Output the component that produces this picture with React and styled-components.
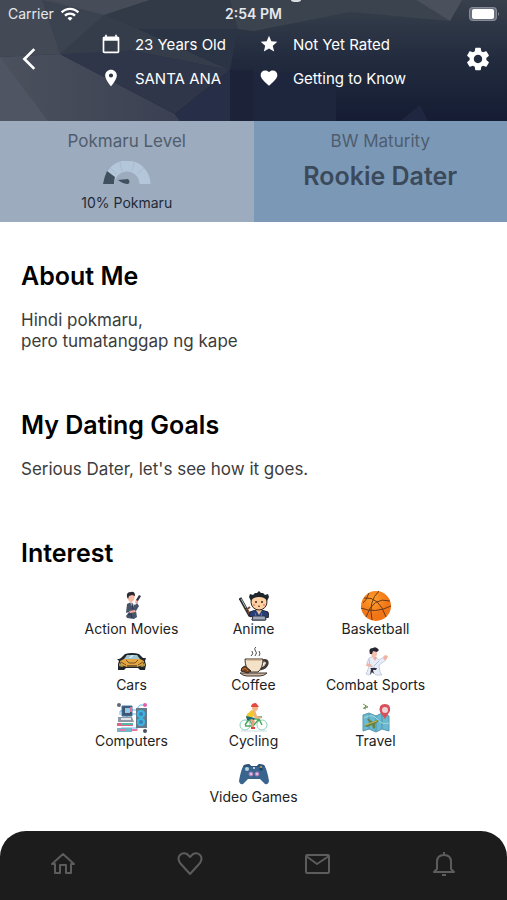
import React from "react";
import styled, { createGlobalStyle } from "styled-components";
import {
  MdArrowBackIosNew,
  MdCalendarToday,
  MdFavorite,
  MdLocationOn,
  MdSettings,
  MdStar,
  MdWifi,
} from "react-icons/md";

const ActionIcon = () => (
  <svg viewBox="0 0 30 30">
    <path d="M10 13 14 11 18 14 20 12 22 15 19 20 20 26 17 28 10 27 9 25 12 21 9 22Z" fill="#46546a" />
    <path d="M13 11 17 12 16 17Z" fill="#f3f3f6" />
    <path d="M15 12 16 18" stroke="#222b3d" strokeWidth="1" />
    <path d="M11 4Q14 0 18 4L17 9 14 12 11 9Z" fill="#f6bca8" />
    <path d="M10 6Q9 1 14 1 18 0 18 5L15 4 12 5 11 8Z" fill="#2b2932" />
    <path d="M18 12 19 8 21 9 21 13Z" fill="#f6a99b" />
    <path d="M19 9 22 4 24 5 21 10Z" fill="#303544" />
    <path d="M12 20 18 19 19 21 13 22Z" fill="#f3aaa0" />
    <path d="M11 24 14 23 15 27" stroke="#26324a" strokeWidth="1" fill="none" />
  </svg>
);

const AnimeIcon = () => (
  <svg viewBox="0 0 30 30">
    <path d="M1 7 11 25" stroke="#25282d" strokeWidth="3" />
    <path d="M2 8 7 17" stroke="#aeb8bd" strokeWidth="1" />
    <path d="M7 19 11 16M9 20 12 26" stroke="#7c4930" strokeWidth="2" />
    <path d="M11 21Q19 17 29 21L30 26 26 27V29H13L14 26 10 25Z" fill="#273e79" stroke="#202331" />
    <path d="M14 25H26L27 29H13Z" fill="#9fa9ba" stroke="#353847" />
    <path d="M17 19 20 24 23 19Z" fill="#f0c297" />
    <circle cx="20" cy="11" r="8" fill="#ffd0a0" stroke="#312825" />
    <path d="M12 10 10 6 11 3 14 4 16 2 18 2 20 0 22 2 24 2 26 4 29 3 30 6 28 10Q26 6 20 6 14 6 12 10Z" fill="#1e252b" />
    <circle cx="17" cy="11" r="1" fill="#332624" />
    <circle cx="23" cy="11" r="1" fill="#332624" />
    <circle cx="15" cy="14" r="1" fill="#ef8174" />
    <circle cx="25" cy="14" r="1" fill="#ef8174" />
    <path d="M19 15Q20 16 21 15" stroke="#593429" fill="none" />
    <path d="M16 22 17 25M23 22 22 25" stroke="#5274b8" />
  </svg>
);

const BasketballIcon = () => (
  <svg viewBox="0 0 30 30">
    <defs>
      <radialGradient id="ball" cx="40%" cy="30%">
        <stop offset="0" stopColor="#ffa02d" />
        <stop offset="1" stopColor="#f07517" />
      </radialGradient>
    </defs>
    <circle cx="15" cy="15" r="15" fill="url(#ball)" />
    <path
      d="M18 0Q7 10 11 29M0 17Q14 23 30 15M3 7Q18 5 25 26M5 26Q12 5 29 10M8 2Q5 10 2 12"
      stroke="#6b3a18"
      strokeWidth="1"
      fill="none"
    />
  </svg>
);

const CarIcon = () => (
  <svg viewBox="0 0 30 30">
    <path d="M2 12 4 11 8 7Q15 5 22 7L26 11 29 11 28 14 29 18 28 23H23L21 21H9L7 23H1L1 17 2 14 0 12Z" fill="#20242b" />
    <path d="M7 12 10 8H20L23 12Z" fill="#9fc3cf" />
    <path d="M12 11 15 8 17 8 14 11Z" fill="#e1eff0" />
    <path d="M3 14 7 12H23L27 14 26 18 20 20H10L4 18Z" fill="#e3a640" />
    <path d="M9 13 12 16H18L21 13M4 15 9 18M26 15 21 18" stroke="#795021" fill="none" />
    <path d="M2 16 7 19 5 20 2 19ZM28 16 23 19 25 20 28 19Z" fill="#b29848" />
    <path d="M10 19H20" stroke="#151a20" strokeWidth="1" />
  </svg>
);

const CoffeeIcon = () => (
  <svg viewBox="0 0 30 30">
    <path d="M12 9Q15 7 13 4M16 9Q19 6 16 3 15 1 17 0M20 9Q22 7 20 4" stroke="#4e4b4b" fill="none" />
    <path d="M23 14Q29 12 28 17 27 21 21 22" stroke="#3f3935" strokeWidth="3" fill="none" />
    <path d="M23 15Q27 14 26 17 25 19 22 20" stroke="#d8c3a7" fill="none" />
    <path d="M6 12H24Q24 21 19 25H11Q6 21 6 12Z" fill="#f3e1c8" stroke="#38332f" />
    <path d="M8 13H22" stroke="#c79a70" strokeWidth="1" />
    <path d="M1 26H28Q25 29 21 29H8Q4 29 1 26Z" fill="#cbb39c" stroke="#403834" />
    <path d="M2 24Q2 20 6 19L12 24 9 26Z" fill="#754320" stroke="#39251d" />
    <path d="M3 23 6 21 9 24" stroke="#bd7636" fill="none" />
  </svg>
);

const CombatIcon = () => (
  <svg viewBox="0 0 30 30">
    <path d="M8 11 13 9 18 13 23 10 25 13 18 18 19 25 21 28 15 28 12 25 8 28 5 27 8 20 6 16Z" fill="#e9edf8" stroke="#c6cee0" strokeWidth="1" />
    <path d="M11 9 16 10 14 14Z" fill="#efad99" />
    <path d="M10 3 16 3 16 8 13 11 10 8Z" fill="#f4c1ac" />
    <path d="M9 7Q7 1 12 1 15-1 18 3L16 5 12 4 11 7Z" fill="#282630" />
    <path d="M22 10 24 8 27 9 26 12 23 13Z" fill="#f0b3a2" />
    <path d="M8 12 9 19 14 21M18 14 13 19" stroke="#b6c0d7" fill="none" />
    <path d="M9 21 16 21 15 23 12 23 13 27 11 25 9 28 10 22Z" fill="#30333f" />
    <path d="M6 16 11 18 10 20 5 19Z" fill="#efb3a3" />
  </svg>
);

const ComputerIcon = () => (
  <svg viewBox="0 0 30 30">
    <path d="M15 7H19L23 2H27M3 12V8H6M15 11H19M4 25H20V28M10 13V15" stroke="#6db7e9" fill="none" />
    <circle cx="2" cy="2" r="2" fill="#626775" />
    <circle cx="28" cy="2" r="2" fill="#e75eab" />
    <circle cx="28" cy="28" r="2" fill="#4a5060" />
    <path d="M5 3H15V13H5Z" fill="#455468" stroke="#3a73a7" />
    <path d="M8 5H13V10H8Z" fill="#8ccbe9" />
    <path d="M13 4H15V9H13Z" fill="#df739d" />
    <path d="M19 5H30V25H19Z" fill="#66798b" />
    <circle cx="24" cy="11" r="4" fill="#39b7e0" />
    <circle cx="24" cy="19" r="4" fill="#39b7e0" />
    <circle cx="24" cy="11" r="2" fill="#3d7fb5" />
    <circle cx="24" cy="19" r="2" fill="#3d7fb5" />
    <path d="M1 14H15L17 19H1Z" fill="#8f97a6" />
    <path d="M4 16H14" stroke="#e2e5ea" strokeWidth="2" />
    <path d="M0 20H16V23H0Z" fill="#dc6684" />
    <path d="M4 20H16V22H4Z" fill="#58b7a9" />
    <path d="M0 25H15V29H0Z" fill="#6fb9ca" />
    <path d="M2 27H9M14 27H20" stroke="#e778a2" strokeWidth="2" />
  </svg>
);

const CyclingIcon = () => (
  <svg viewBox="0 0 30 30">
    <circle cx="6" cy="22" r="5" fill="none" stroke="#8fcfbc" />
    <circle cx="23" cy="22" r="5" fill="none" stroke="#8fcfbc" />
    <path d="M2 28H28" stroke="#c8dddd" />
    <path d="M6 22 10 16H20L14 23H6M10 16 14 23M23 22 19 14H23" stroke="#48a95d" strokeWidth="1.5" fill="none" />
    <path d="M11 8 16 7 18 13 22 14 21 16 16 15 14 12Z" fill="#f1ae82" />
    <path d="M8 11 13 7 16 11 12 16 7 15Z" fill="#f0c72e" />
    <path d="M7 13 16 15 14 18 8 17Z" fill="#176c76" />
    <path d="M13 16 16 18 14 24 16 25 12 25 13 19 10 17Z" fill="#e8a17d" />
    <circle cx="16" cy="5" r="3" fill="#f2b487" />
    <path d="M12 4Q12 0 17 0L20 4Z" fill="#e34a40" />
    <path d="M12 25H16" stroke="#de3e3f" strokeWidth="2" />
  </svg>
);

const TravelIcon = () => (
  <svg viewBox="0 0 30 30">
    <path d="M2 12 8 10 15 13 21 10 28 13V28L21 26 15 29 8 26 2 28Z" fill="#69b9d3" stroke="#5797ac" />
    <path d="M8 11V26M15 13V28M21 11V26" stroke="#4b93af" />
    <path d="M3 15Q12 10 16 16T28 20" stroke="#a5d9d2" strokeWidth="1" fill="none" />
    <path d="M3 23 9 20 6 16 8 16 12 19 16 17 18 18 14 21 14 25 12 26 11 22 6 24Z" fill="#668544" />
    <path d="M4 22 16 18" stroke="#d3b24a" />
    <path d="M24 16 19 9Q17 1 24 1 30 1 29 8Z" fill="#d94f5a" />
    <circle cx="24" cy="7" r="3" fill="#edd3d9" />
    <path d="M2 1 7 4 3 5 5 3M2 5 5 6" stroke="#769459" fill="none" />
  </svg>
);

const GamesIcon = () => (
  <svg viewBox="0 0 30 30">
    <path d="M5 6 10 5 12 7H18L20 5 25 6Q28 10 30 22 29 26 26 25L21 20H9L4 25Q1 26 0 22 2 10 5 6Z" fill="#38648d" />
    <path d="M5 6 10 5 12 7H18L20 5 25 6 26 8H4Z" fill="#2c5379" />
    <circle cx="8" cy="10" r="2" fill="#b8d4e3" />
    <circle cx="15" cy="9" r="1" fill="#d8e8f2" />
    <path d="M22 8V12M20 10H24" stroke="#15385c" strokeWidth="1" />
    <circle cx="22" cy="8" r="1" fill="#d9a558" />
    <circle cx="12" cy="15" r="2" fill="#e3b8df" stroke="#a478b4" />
    <circle cx="18" cy="15" r="2" fill="#e3b8df" stroke="#a478b4" />
  </svg>
);

const HomeIcon = () => (
  <NavSvg viewBox="0 0 28 28">
    <path d="M3 14 14 4 25 14H22V23H17V15H11V23H6V14Z" />
  </NavSvg>
);

const HeartIcon = () => (
  <NavSvg viewBox="0 0 28 28">
    <path d="M14 24 4 13Q1 8 4 5 7 2 11 4L14 7 17 4Q21 2 24 5 27 8 24 13Z" />
  </NavSvg>
);

const MailIcon = () => (
  <NavSvg viewBox="0 0 28 28">
    <rect x="3" y="5" width="23" height="18" rx="1" />
    <path d="M3 6 14 14 26 6" />
  </NavSvg>
);

const BellIcon = () => (
  <NavSvg viewBox="0 0 28 28">
    <path d="M4 22H24L21 19V12Q21 5 14 5 7 5 7 12V19L4 22ZM14 5V2M12 25H16" />
  </NavSvg>
);

const intereses = [
  { name: "Action Movies", Icon: ActionIcon },
  { name: "Anime", Icon: AnimeIcon },
  { name: "Basketball", Icon: BasketballIcon },
  { name: "Cars", Icon: CarIcon },
  { name: "Coffee", Icon: CoffeeIcon },
  { name: "Combat Sports", Icon: CombatIcon },
  { name: "Computers", Icon: ComputerIcon },
  { name: "Cycling", Icon: CyclingIcon },
  { name: "Travel", Icon: TravelIcon },
  { name: "Video Games", Icon: GamesIcon },
];

const datos = [
  { text: "23 Years Old", Icon: MdCalendarToday },
  { text: "Not Yet Rated", Icon: MdStar },
  { text: "SANTA ANA", Icon: MdLocationOn },
  { text: "Getting to Know", Icon: MdFavorite },
];

const menu = [
  { name: "Home", Icon: HomeIcon },
  { name: "Likes", Icon: HeartIcon },
  { name: "Messages", Icon: MailIcon },
  { name: "Notifications", Icon: BellIcon },
];

const Backdrop = () => (
  <BackdropSvg viewBox="0 0 507 121" preserveAspectRatio="none" aria-hidden="true">
    <defs>
      <linearGradient id="night" x1="0" y1="0" x2="0" y2="1">
        <stop offset="0" stopColor="#38404c" />
        <stop offset="0.5" stopColor="#222b3e" />
        <stop offset="1" stopColor="#151c33" />
      </linearGradient>
      <linearGradient id="fade" x1="0" y1="0" x2="1" y2="0">
        <stop offset="0" stopColor="#4c515d" />
        <stop offset="1" stopColor="#3a4052" />
      </linearGradient>
    </defs>
    <rect width="507" height="121" fill="url(#night)" />
    <path d="M0 0H150L104 15 60 54 0 57Z" fill="#434955" />
    <path d="M38 0H150L104 15 50 0Z" fill="#474d58" />
    <path d="M42 0 104 15 138 54 60 54Z" fill="#3b4250" />
    <path d="M0 57 60 54 175 114 180 121H0Z" fill="url(#fade)" />
    <path d="M0 57 48 121H0Z" fill="#505563" />
    <path d="M104 15 150 0H250L238 29 130 50Z" fill="#313a46" />
    <path d="M60 54 130 50 230 70 175 114Z" fill="#2f3649" />
    <path d="M104 15 138 29 230 70 130 50 60 54Z" fill="#353d4b" />
    <path d="M138 29 238 29 230 70Z" fill="#2a3444" />
    <path d="M175 114 230 70V121H180Z" fill="#272e47" />
    <path d="M230 0H416L450 21 350 12 254 31 238 29Z" fill="#3a434e" />
    <path d="M416 0H462L450 21Z" fill="#4a515c" />
    <path d="M230 70H253V121H230Z" fill="#1c2339" />
    <path d="M253 73 315 72 336 88V121H253Z" fill="#1e263e" />
    <path d="M400 121 420 105 428 121Z" fill="#1e273f" />
    <ellipse cx="296" cy="0" rx="5" ry="2" fill="#d9dce1" />
  </BackdropSvg>
);

const Gauge = () => (
  <GaugeSvg viewBox="0 0 48 24" role="img" aria-label="Pokmaru gauge">
    <path d="M6 23A18 18 0 0 1 42 23" fill="none" stroke="#b4c6d9" strokeWidth="11" />
    <path d="M0 23Q1 16 4 10L12 16Q11 19 11 23Z" fill="#40505f" />
    <path d="M7 7 14 13M17 1 19 10M31 1 29 10M41 7 34 13" stroke="#a9bccf" />
    <path d="M15 19 25 18Q28 21 25 23 20 23 15 19Z" fill="#40505f" />
  </GaugeSvg>
);

export default function App() {
  return (
    <>
      <GlobalStyle />
      <Page>
        <Header>
          <Backdrop />
          <StatusBar>
            <Carrier>
              Carrier <MdWifi size={20} />
            </Carrier>
            <Clock>2:54 PM</Clock>
            <BatterySvg viewBox="0 0 30 14" aria-label="Battery">
              <rect x="0" y="0" width="28" height="14" rx="4" fill="#868b95" />
              <rect x="1" y="1" width="26" height="12" rx="3" fill="#6a707c" />
              <rect x="3" y="2" width="22" height="10" rx="2" fill="#fff" />
              <path d="M29 5Q31 7 29 9Z" fill="#868b95" />
            </BatterySvg>
          </StatusBar>
          <HeaderRow>
            <IconButton type="button" aria-label="Back">
              <MdArrowBackIosNew size={26} />
            </IconButton>
            <InfoGrid>
              {datos.map(({ text, Icon }) => (
                <InfoItem key={text}>
                  <Icon size={20} />
                  {text}
                </InfoItem>
              ))}
            </InfoGrid>
            <IconButton type="button" aria-label="Settings">
              <MdSettings size={28} />
            </IconButton>
          </HeaderRow>
        </Header>

        <Stats>
          <Stat $bg="#9cabbd">
            <StatTitle>Pokmaru Level</StatTitle>
            <Gauge />
            <StatNote>10% Pokmaru</StatNote>
          </Stat>
          <Stat $bg="#7b99b7">
            <StatTitle>BW Maturity</StatTitle>
            <StatValue>Rookie Dater</StatValue>
          </Stat>
        </Stats>

        <Content>
          <Section>
            <Title>About Me</Title>
            <Text>
              Hindi pokmaru,
              <br />
              pero tumatanggap ng kape
            </Text>
          </Section>
          <Section>
            <Title>My Dating Goals</Title>
            <Text>Serious Dater, let's see how it goes.</Text>
          </Section>
          <section>
            <Title>Interest</Title>
            <InterestList>
              {intereses.map(({ name, Icon }) => (
                <Interest key={name}>
                  <Icon />
                  {name}
                </Interest>
              ))}
            </InterestList>
          </section>
        </Content>

        <NavBar>
          {menu.map(({ name, Icon }) => (
            <NavButton type="button" key={name} aria-label={name}>
              <Icon />
            </NavButton>
          ))}
        </NavBar>
      </Page>
    </>
  );
}

const GlobalStyle = createGlobalStyle`
  * {
    box-sizing: border-box;
  }

  body {
    margin: 0;
    background: #fff;
    font-family: Inter, "Liberation Sans", sans-serif;
  }

  button {
    border: none;
    background: none;
    padding: 0;
    cursor: pointer;
  }
`;

const Page = styled.div`
  min-height: 100vh;
  display: flex;
  flex-direction: column;
`;

const Header = styled.header`
  position: relative;
  isolation: isolate;
  padding-bottom: 26px;
  color: #fff;
`;

const BackdropSvg = styled.svg`
  position: absolute;
  inset: 0;
  width: 100%;
  height: 100%;
  z-index: -1;
`;

const StatusBar = styled.div`
  display: grid;
  grid-template-columns: 1fr auto 1fr;
  align-items: center;
  height: 27px;
  padding: 0 8px;
  font-size: 14px;
  color: #e6e8ec;
`;

const Carrier = styled.span`
  display: flex;
  align-items: center;
  gap: 6px;

  svg {
    color: #fff;
  }
`;

const Clock = styled.span`
  font-weight: 600;
`;

const BatterySvg = styled.svg`
  width: 30px;
  height: 14px;
  justify-self: end;
`;

const HeaderRow = styled.div`
  display: flex;
  align-items: flex-start;
  justify-content: space-between;
  padding: 0 14px;
`;

const IconButton = styled.button`
  display: flex;
  align-items: center;
  justify-content: center;
  width: 30px;
  height: 64px;
  color: #fff;
`;

const InfoGrid = styled.div`
  display: grid;
  grid-template-columns: 158px auto;
`;

const InfoItem = styled.div`
  display: flex;
  align-items: center;
  gap: 14px;
  height: 34px;
  font-size: 15px;
  white-space: nowrap;
`;

const Stats = styled.div`
  display: grid;
  grid-template-columns: 1fr 1fr;
`;

const Stat = styled.div`
  display: flex;
  flex-direction: column;
  align-items: center;
  min-height: 101px;
  padding-top: 8px;
  background: ${({ $bg }) => $bg};
`;

const StatTitle = styled.div`
  font-size: 17px;
  line-height: 24px;
  color: #4f5d6e;
`;

const GaugeSvg = styled.svg`
  width: 48px;
  height: 24px;
  margin: 8px 0;
`;

const StatNote = styled.div`
  font-size: 14px;
  line-height: 20px;
  color: #1f2a38;
`;

const StatValue = styled.div`
  margin-top: 8px;
  font-size: 25px;
  font-weight: 600;
  line-height: 30px;
  color: #3b4a5b;
`;

const Content = styled.main`
  flex: 1;
  padding: 38px 21px 20px;
`;

const Section = styled.section`
  margin-bottom: 57px;
`;

const Title = styled.h2`
  margin: 0 0 18px;
  font-size: 25px;
  font-weight: 600;
  line-height: 32px;
  color: #000;
`;

const Text = styled.p`
  margin: 0;
  font-size: 17px;
  line-height: 21px;
  color: #3c3c3c;
`;

const InterestList = styled.ul`
  display: flex;
  flex-wrap: wrap;
  justify-content: center;
  row-gap: 10px;
  max-width: 366px;
  margin: 0 auto;
  padding: 4px 0 0;
  list-style: none;
`;

const Interest = styled.li`
  display: flex;
  flex-direction: column;
  align-items: center;
  width: 122px;
  font-size: 14px;
  line-height: 16px;
  color: #222;

  svg {
    width: 30px;
    height: 30px;
  }
`;

const NavBar = styled.nav`
  display: grid;
  grid-template-columns: repeat(4, 1fr);
  height: 69px;
  padding-bottom: 4px;
  background: #1c1c1c;
  border-radius: 26px 26px 0 0;
`;

const NavButton = styled.button`
  display: flex;
  align-items: center;
  justify-content: center;
  color: #5c5c5c;
`;

const NavSvg = styled.svg`
  width: 28px;
  height: 28px;
  fill: none;
  stroke: currentColor;
  stroke-width: 2;
  stroke-linejoin: round;
`;
